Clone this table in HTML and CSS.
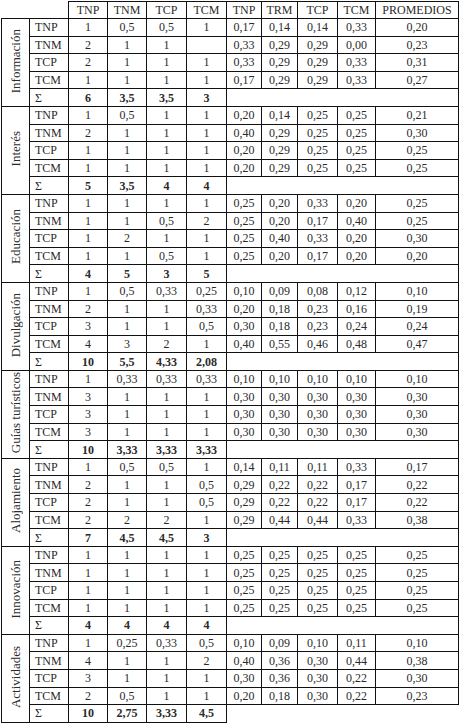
FILE: index.html
```html
<!DOCTYPE html>
<html lang="es">
<head>
<meta charset="utf-8">
<link rel="stylesheet" href="styles.css">
</head>
<body>
<table class="tbl">
<colgroup>
<col class="c-grp"><col class="c-lab"><col class="c-a"><col class="c-a"><col class="c-b"><col class="c-b"><col class="c-c"><col class="c-d"><col class="c-e"><col class="c-f"><col class="c-g">
</colgroup>
<thead>
<tr class="hd"><th class="corner" colspan="2"></th><th>TNP</th><th>TNM</th><th>TCP</th><th>TCM</th><th>TNP</th><th>TRM</th><th>TCP</th><th>TCM</th><th>PROMEDIOS</th></tr>
</thead>
<tbody>
<tr><td class="grp" rowspan="5"><span>Información</span></td><td class="lab">TNP</td><td>1</td><td>0,5</td><td>0,5</td><td>1</td><td>0,17</td><td>0,14</td><td>0,14</td><td>0,33</td><td>0,20</td></tr>
<tr><td class="lab">TNM</td><td>2</td><td>1</td><td>1</td><td></td><td>0,33</td><td>0,29</td><td>0,29</td><td>0,00</td><td>0,23</td></tr>
<tr><td class="lab">TCP</td><td>2</td><td>1</td><td>1</td><td>1</td><td>0,33</td><td>0,29</td><td>0,29</td><td>0,33</td><td>0,31</td></tr>
<tr><td class="lab">TCM</td><td>1</td><td>1</td><td>1</td><td>1</td><td>0,17</td><td>0,29</td><td>0,29</td><td>0,33</td><td>0,27</td></tr>
<tr class="sum"><td class="lab">Σ</td><td>6</td><td>3,5</td><td>3,5</td><td>3</td><td colspan="5" class="gap"></td></tr>

<tr><td class="grp" rowspan="5"><span>Interés</span></td><td class="lab">TNP</td><td>1</td><td>0,5</td><td>1</td><td>1</td><td>0,20</td><td>0,14</td><td>0,25</td><td>0,25</td><td>0,21</td></tr>
<tr><td class="lab">TNM</td><td>2</td><td>1</td><td>1</td><td>1</td><td>0,40</td><td>0,29</td><td>0,25</td><td>0,25</td><td>0,30</td></tr>
<tr><td class="lab">TCP</td><td>1</td><td>1</td><td>1</td><td>1</td><td>0,20</td><td>0,29</td><td>0,25</td><td>0,25</td><td>0,25</td></tr>
<tr><td class="lab">TCM</td><td>1</td><td>1</td><td>1</td><td>1</td><td>0,20</td><td>0,29</td><td>0,25</td><td>0,25</td><td>0,25</td></tr>
<tr class="sum"><td class="lab">Σ</td><td>5</td><td>3,5</td><td>4</td><td>4</td><td colspan="5" class="gap"></td></tr>

<tr><td class="grp" rowspan="5"><span>Educación</span></td><td class="lab">TNP</td><td>1</td><td>1</td><td>1</td><td>1</td><td>0,25</td><td>0,20</td><td>0,33</td><td>0,20</td><td>0,25</td></tr>
<tr><td class="lab">TNM</td><td>1</td><td>1</td><td>0,5</td><td>2</td><td>0,25</td><td>0,20</td><td>0,17</td><td>0,40</td><td>0,25</td></tr>
<tr><td class="lab">TCP</td><td>1</td><td>2</td><td>1</td><td>1</td><td>0,25</td><td>0,40</td><td>0,33</td><td>0,20</td><td>0,30</td></tr>
<tr><td class="lab">TCM</td><td>1</td><td>1</td><td>0,5</td><td>1</td><td>0,25</td><td>0,20</td><td>0,17</td><td>0,20</td><td>0,20</td></tr>
<tr class="sum"><td class="lab">Σ</td><td>4</td><td>5</td><td>3</td><td>5</td><td colspan="5" class="gap"></td></tr>

<tr><td class="grp" rowspan="5"><span>Divulgación</span></td><td class="lab">TNP</td><td>1</td><td>0,5</td><td>0,33</td><td>0,25</td><td>0,10</td><td>0,09</td><td>0,08</td><td>0,12</td><td>0,10</td></tr>
<tr><td class="lab">TNM</td><td>2</td><td>1</td><td>1</td><td>0,33</td><td>0,20</td><td>0,18</td><td>0,23</td><td>0,16</td><td>0,19</td></tr>
<tr><td class="lab">TCP</td><td>3</td><td>1</td><td>1</td><td>0,5</td><td>0,30</td><td>0,18</td><td>0,23</td><td>0,24</td><td>0,24</td></tr>
<tr><td class="lab">TCM</td><td>4</td><td>3</td><td>2</td><td>1</td><td>0,40</td><td>0,55</td><td>0,46</td><td>0,48</td><td>0,47</td></tr>
<tr class="sum"><td class="lab">Σ</td><td>10</td><td>5,5</td><td>4,33</td><td>2,08</td><td colspan="5" class="gap"></td></tr>

<tr><td class="grp" rowspan="5"><span>Guías turísticos</span></td><td class="lab">TNP</td><td>1</td><td>0,33</td><td>0,33</td><td>0,33</td><td>0,10</td><td>0,10</td><td>0,10</td><td>0,10</td><td>0,10</td></tr>
<tr><td class="lab">TNM</td><td>3</td><td>1</td><td>1</td><td>1</td><td>0,30</td><td>0,30</td><td>0,30</td><td>0,30</td><td>0,30</td></tr>
<tr><td class="lab">TCP</td><td>3</td><td>1</td><td>1</td><td>1</td><td>0,30</td><td>0,30</td><td>0,30</td><td>0,30</td><td>0,30</td></tr>
<tr><td class="lab">TCM</td><td>3</td><td>1</td><td>1</td><td>1</td><td>0,30</td><td>0,30</td><td>0,30</td><td>0,30</td><td>0,30</td></tr>
<tr class="sum"><td class="lab">Σ</td><td>10</td><td>3,33</td><td>3,33</td><td>3,33</td><td colspan="5" class="gap"></td></tr>

<tr><td class="grp" rowspan="5"><span>Alojamiento</span></td><td class="lab">TNP</td><td>1</td><td>0,5</td><td>0,5</td><td>1</td><td>0,14</td><td>0,11</td><td>0,11</td><td>0,33</td><td>0,17</td></tr>
<tr><td class="lab">TNM</td><td>2</td><td>1</td><td>1</td><td>0,5</td><td>0,29</td><td>0,22</td><td>0,22</td><td>0,17</td><td>0,22</td></tr>
<tr><td class="lab">TCP</td><td>2</td><td>1</td><td>1</td><td>0,5</td><td>0,29</td><td>0,22</td><td>0,22</td><td>0,17</td><td>0,22</td></tr>
<tr><td class="lab">TCM</td><td>2</td><td>2</td><td>2</td><td>1</td><td>0,29</td><td>0,44</td><td>0,44</td><td>0,33</td><td>0,38</td></tr>
<tr class="sum"><td class="lab">Σ</td><td>7</td><td>4,5</td><td>4,5</td><td>3</td><td colspan="5" class="gap"></td></tr>

<tr><td class="grp" rowspan="5"><span>Innovación</span></td><td class="lab">TNP</td><td>1</td><td>1</td><td>1</td><td>1</td><td>0,25</td><td>0,25</td><td>0,25</td><td>0,25</td><td>0,25</td></tr>
<tr><td class="lab">TNM</td><td>1</td><td>1</td><td>1</td><td>1</td><td>0,25</td><td>0,25</td><td>0,25</td><td>0,25</td><td>0,25</td></tr>
<tr><td class="lab">TCP</td><td>1</td><td>1</td><td>1</td><td>1</td><td>0,25</td><td>0,25</td><td>0,25</td><td>0,25</td><td>0,25</td></tr>
<tr><td class="lab">TCM</td><td>1</td><td>1</td><td>1</td><td>1</td><td>0,25</td><td>0,25</td><td>0,25</td><td>0,25</td><td>0,25</td></tr>
<tr class="sum"><td class="lab">Σ</td><td>4</td><td>4</td><td>4</td><td>4</td><td colspan="5" class="gap"></td></tr>

<tr><td class="grp" rowspan="5"><span>Actividades</span></td><td class="lab">TNP</td><td>1</td><td>0,25</td><td>0,33</td><td>0,5</td><td>0,10</td><td>0,09</td><td>0,10</td><td>0,11</td><td>0,10</td></tr>
<tr><td class="lab">TNM</td><td>4</td><td>1</td><td>1</td><td>2</td><td>0,40</td><td>0,36</td><td>0,30</td><td>0,44</td><td>0,38</td></tr>
<tr><td class="lab">TCP</td><td>3</td><td>1</td><td>1</td><td>1</td><td>0,30</td><td>0,36</td><td>0,30</td><td>0,22</td><td>0,30</td></tr>
<tr><td class="lab">TCM</td><td>2</td><td>0,5</td><td>1</td><td>1</td><td>0,20</td><td>0,18</td><td>0,30</td><td>0,22</td><td>0,23</td></tr>
<tr class="sum"><td class="lab">Σ</td><td>10</td><td>2,75</td><td>3,33</td><td>4,5</td><td colspan="5" class="gap open"></td></tr>
</tbody>
</table>
</body>
</html>
```
FILE: styles.css
```css
html, body {
  margin: 0;
  padding: 0;
  background: #fff;
}
body {
  padding: 1px 0 0 1px;
  font-family: "Liberation Serif", "DejaVu Serif", serif;
  font-size: 12px;
  color: #2a2a2a;
}
.tbl {
  border-collapse: collapse;
  table-layout: fixed;
  width: 458px;
}
.c-grp { width: 28px; }
.c-lab { width: 39px; }
.c-a { width: 39px; }
.c-b { width: 40px; }
.c-c { width: 35px; }
.c-d { width: 36px; }
.c-e { width: 40px; }
.c-f { width: 38px; }
.c-g { width: 83px; }
.tbl th,
.tbl td {
  border: 1px solid #111;
  padding: 0;
  height: 16.6px;
  line-height: 14px;
  text-align: center;
  vertical-align: middle;
  white-space: nowrap;
  font-weight: normal;
}
.hd th {
  height: 16px;
}
.tbl th.corner {
  border: none;
}
.tbl td.lab {
  text-align: left;
  padding-left: 5px;
}
.sum td {
  font-weight: bold;
}
.sum td.lab {
  font-weight: normal;
}
.tbl td.grp {
  font-size: 13px;
  padding: 0;
}
.grp span {
  display: inline-block;
  writing-mode: vertical-rl;
  transform: rotate(180deg);
  line-height: 18px;
}
.tbl td.open {
  border-right: none;
  border-bottom: none;
}
```
